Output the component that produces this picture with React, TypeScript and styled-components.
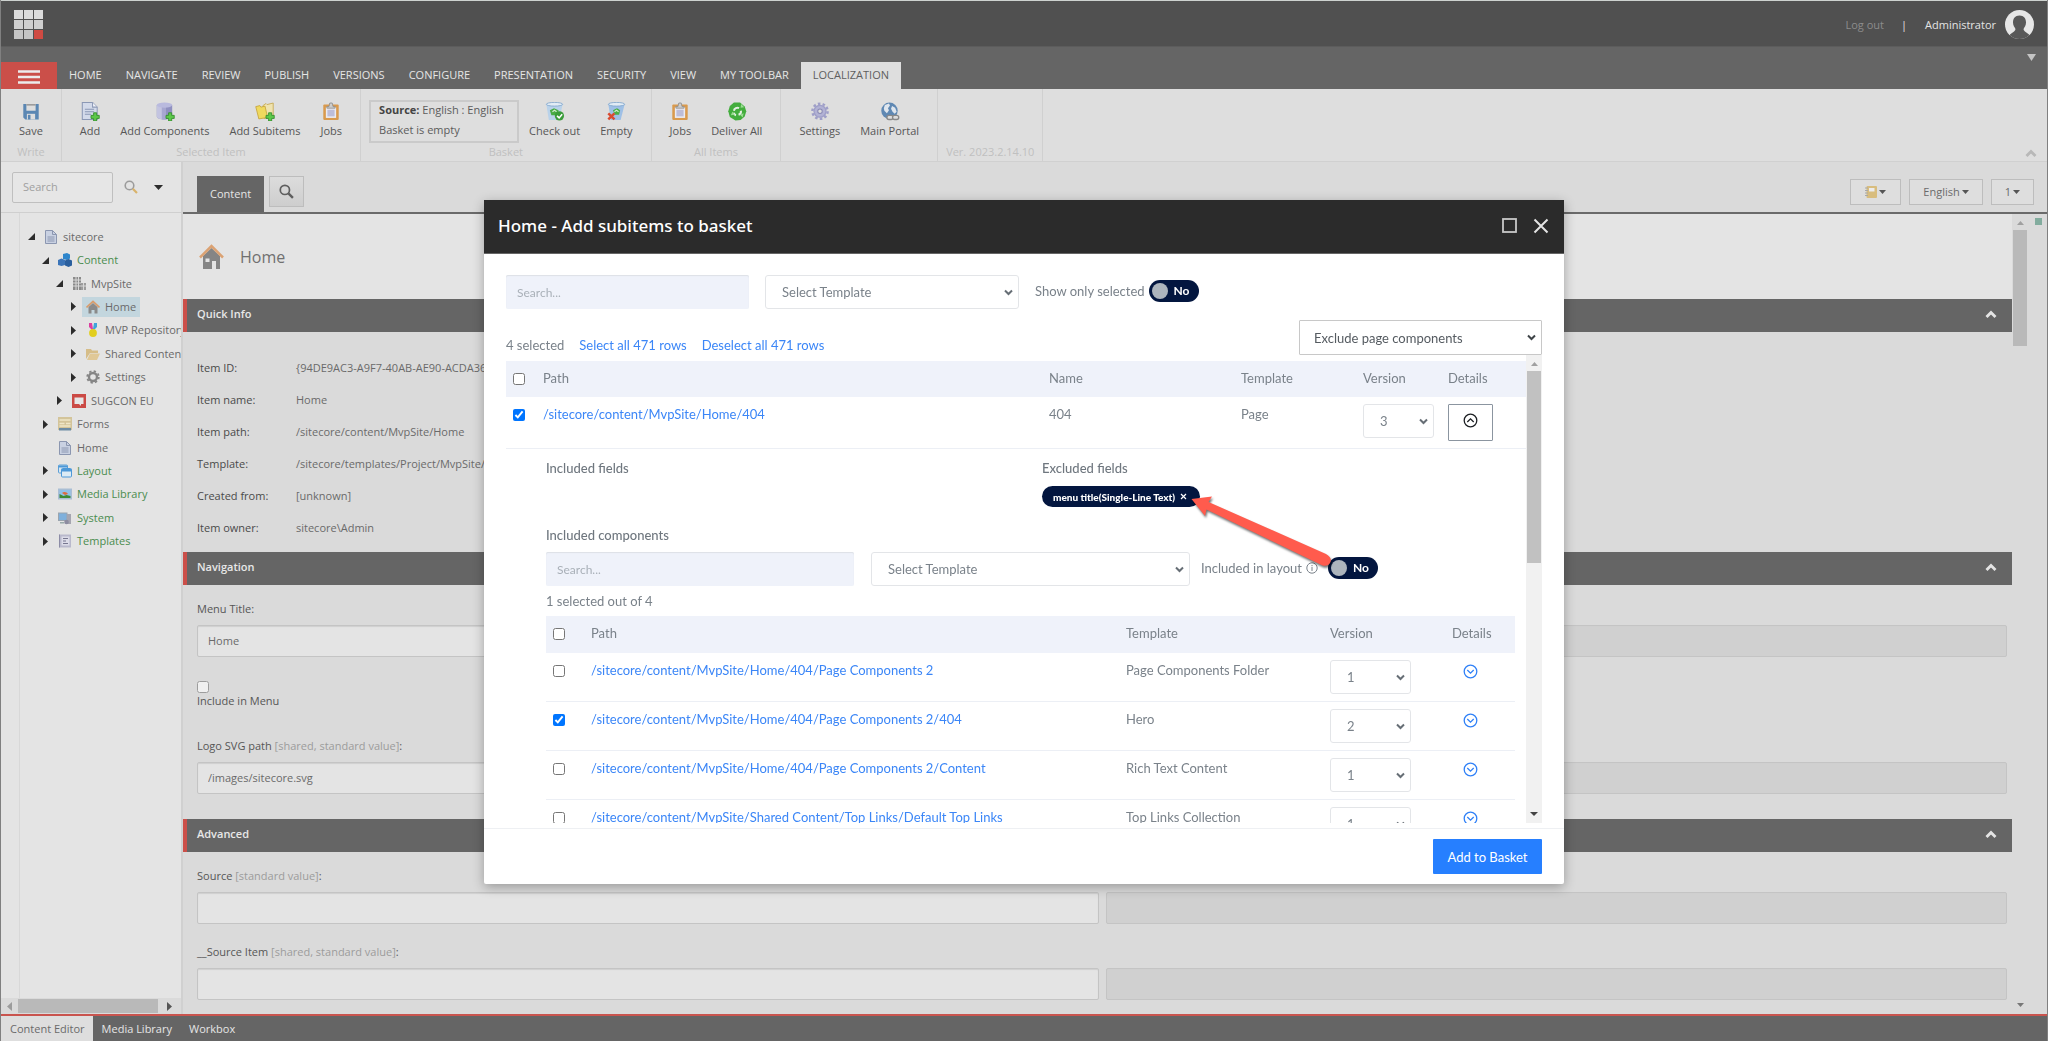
import React from "react";
import styled, { createGlobalStyle, css } from "styled-components";

const ui = `"Open Sans", "Noto Sans", sans-serif`;
const rounded = `Lato, "Open Sans", sans-serif`;

const GlobalStyle = createGlobalStyle`
  * { box-sizing: border-box; }
  body { margin: 0; overflow: hidden; background: #dadada; font-family: ${ui}; font-size: 11px; line-height: 16px; color: #6a6a6a; }
  button, input, select { font: inherit; color: inherit; margin: 0; }
  a { text-decoration: none; color: inherit; }
  ul, dl, dd, h1, h2, h3 { margin: 0; padding: 0; list-style: none; }
  svg { display: block; flex: none; }
`;

/* ---------- page frame ---------- */

const Page = styled.div`
  display: flex;
  flex-direction: column;
  height: 100vh;
  border: solid #808080;
  border-width: 0 1px;
`;

const TopBar = styled.header`
  display: flex;
  align-items: center;
  justify-content: space-between;
  height: 46px;
  flex: none;
  padding: 2px 13px 0 13px;
  border-top: 1px solid #cdd2cf;
  background: #505050;
`;

const Account = styled.div`
  display: flex;
  align-items: center;
  color: #e4e4e4;
`;

const LogOut = styled.a`
  color: #8c8c8c;
`;

const Divider = styled.span`
  padding: 0 18px 0 17px;
`;

const UserName = styled.span`
  margin-right: 9px;
`;

const TabStrip = styled.nav`
  display: flex;
  align-items: flex-end;
  height: 43px;
  flex: none;
  background: #656565;
  border-top: 1px solid #5c5c5c;
`;

const MenuButton = styled.button`
  display: grid;
  place-items: center;
  width: 56px;
  height: 27px;
  padding: 2px 0 0;
  border: 0;
  background: #cb4f49;
`;

const RibbonTab = styled.button<{ $active?: boolean }>`
  height: 27px;
  padding: 0 12px 2px;
  border: 0;
  background: ${(p) => (p.$active ? "#dedede" : "transparent")};
  color: ${(p) => (p.$active ? "#5e5e5e" : "#e6e6e6")};
  text-transform: uppercase;
`;

const StripCaret = styled.div`
  margin-left: auto;
  align-self: flex-start;
  padding: 7px 11px 0 0;
`;

const Ribbon = styled.div`
  display: flex;
  height: 73px;
  flex: none;
  background: #dedede;
  border-bottom: 1px solid #d0d0d0;
`;

const RibbonGroup = styled.section`
  display: flex;
  flex-direction: column;
  justify-content: space-between;
  padding: 11px 8px 2px;
  border-right: 1px solid #d0d0d0;
`;

const RibbonItems = styled.div`
  display: flex;
`;

const RibbonCaption = styled.div`
  text-align: center;
  line-height: 14px;
  color: #c0c0c0;
`;

const RibbonButton = styled.button`
  display: flex;
  flex-direction: column;
  align-items: center;
  gap: 3px;
  padding: 2px 10px 0;
  border: 0;
  background: none;
  line-height: 14px;
  color: #565656;
`;

const BasketInfo = styled.div`
  display: grid;
  align-content: start;
  gap: 4px;
  width: 150px;
  height: 43px;
  padding: 0 8px;
  border: 2px solid #cacaca;
  color: #5c5c5c;

  b { color: #444; }
`;

const RibbonCollapse = styled.div`
  margin-left: auto;
  align-self: flex-end;
  padding: 0 10px 3px 0;
`;

const Body = styled.div`
  display: flex;
  flex: 1;
  min-height: 0;
`;

/* ---------- sidebar ---------- */

const Sidebar = styled.aside`
  display: flex;
  flex-direction: column;
  width: 180px;
  flex: none;
  background: #e4e4e4;
  overflow: hidden;
`;

const SidebarHead = styled.div`
  display: flex;
  align-items: center;
  height: 51px;
  flex: none;
  padding: 0 0 0 11px;
  border-bottom: 1px solid #cfcfcf;
`;

const TreeSearch = styled.input`
  width: 101px;
  height: 31px;
  margin-right: 11px;
  padding: 0 10px 2px;
  border: 1px solid #bfbfbf;
  border-radius: 2px;
  background: #e6e6e6;

  &::placeholder { color: #a0a0a0; }
`;

const SearchCaret = styled.div`
  margin-left: 16px;
`;

const TreePane = styled.div`
  flex: 1;
  min-height: 0;
  margin-left: 18px;
  padding-top: 12px;
  border-left: 1px solid #d8d8d8;
  overflow: hidden;
`;

const Tree = styled.ul`
  display: grid;
  grid-auto-rows: 1fr;
  height: 328px;
`;

const TreeRow = styled.li<{ $level: number }>`
  display: flex;
  align-items: center;
  padding-left: ${(p) => 5 + p.$level * 14}px;
  white-space: nowrap;
`;

const TreeArrow = styled.span`
  display: grid;
  place-items: center;
  width: 12px;
`;

const TreeLink = styled.a<{ $selected?: boolean; $green?: boolean }>`
  display: flex;
  align-items: center;
  gap: 5px;
  height: 20px;
  margin-left: 3px;
  padding: 0 4px 0 4px;
  background: ${(p) => (p.$selected ? "#c3d6de" : "none")};
  color: ${(p) => (p.$green ? "#4a8c4e" : "#6a6a6a")};
`;

const HScroll = styled.div`
  display: grid;
  grid-template-columns: 17px 1fr 23px;
  align-items: center;
  justify-items: center;
  height: 16px;
  background: #dadada;
`;

const HThumb = styled.div`
  width: 100%;
  height: 14px;
  background: #b9b9b9;
`;

const Splitter = styled.div`
  width: 2px;
  flex: none;
  background: #d0d0d0;
`;

/* ---------- editor ---------- */

const Main = styled.main`
  display: flex;
  flex-direction: column;
  flex: 1;
  min-width: 0;
  background: #dadada;
`;

const EditorBar = styled.div`
  display: flex;
  justify-content: space-between;
  align-items: flex-end;
  height: 52px;
  flex: none;
  padding: 0 13px 0 14px;
  border-bottom: 2px solid #6a6a6a;
`;

const EditorTabs = styled.div`
  display: flex;
  align-items: flex-start;
  gap: 5px;
`;

const EditorTab = styled.button`
  height: 36px;
  padding: 0 13px;
  border: 0;
  background: #656565;
  color: #e6e6e6;
`;

const SearchTab = styled.button`
  display: grid;
  place-items: center;
  width: 35px;
  height: 31px;
  padding: 0;
  border: 1px solid #bdbdbd;
  background: linear-gradient(#dcdcdc, #cecece);
`;

const EditorTools = styled.div`
  display: flex;
  gap: 8px;
  padding-bottom: 7px;
`;

const ToolButton = styled.button<{ $width: number }>`
  display: flex;
  align-items: center;
  justify-content: center;
  gap: 2px;
  width: ${(p) => p.$width}px;
  height: 26px;
  padding: 0;
  border: 1px solid #bdbdbd;
  background: #dedede;
`;

const EditorRow = styled.div`
  display: flex;
  flex: 1;
  min-height: 0;
`;

const EditorScroll = styled.div`
  flex: 1;
  min-width: 0;
  overflow: hidden;
`;

const VScroll = styled.div<{ $bg: string }>`
  display: flex;
  flex-direction: column;
  align-items: center;
  width: 16px;
  flex: none;
  padding: 7px 0;
  background: ${(p) => p.$bg};
`;

const VThumb = styled.div<{ $height: number; $bg: string }>`
  width: 14px;
  height: ${(p) => p.$height}px;
  margin: 5px 0 auto;
  background: ${(p) => p.$bg};
`;

const Gutter = styled.div`
  width: 19px;
  flex: none;
  padding: 4px 0 0 7px;
`;

const Validator = styled.div`
  width: 7px;
  height: 7px;
  background: #82ac9e;
`;

const ItemHeader = styled.div`
  display: flex;
  align-items: center;
  gap: 16px;
  height: 85px;
  padding-left: 16px;
  background: #e4e4e4;
`;

const ItemTitle = styled.h1`
  font-size: 16px;
  font-weight: 400;
  line-height: 24px;
  color: #707070;
`;

const SectionHead = styled.h2`
  display: flex;
  align-items: center;
  justify-content: space-between;
  height: 33px;
  padding: 0 15px 3px 10px;
  border-left: 4px solid #cb4f49;
  background: #656565;
  font-size: 11px;
  font-weight: 600;
  color: #e8e8e8;
`;

const InfoList = styled.dl`
  display: grid;
  grid-template-columns: 99px 1fr;
  row-gap: 16px;
  padding: 28px 14px 16px;

  dt { color: #4a4a4a; font-weight: 500; }
`;

const Fields = styled.div`
  padding: 16px 5px 5px 14px;
`;

const Field = styled.div`
  margin-bottom: 20px;
`;

const FieldLabel = styled.label`
  display: block;
  margin-bottom: 8px;
  color: #565656;

  span { color: #9c9c9c; }
`;

const FieldPair = styled.div`
  display: grid;
  grid-template-columns: 1fr 1fr;
  gap: 7px;
`;

const FieldInput = styled.input`
  width: 100%;
  height: 32px;
  padding: 0 10px 2px;
  border: 1px solid #c4c4c4;
  border-radius: 2px;
  background: #e4e4e4;
  box-shadow: inset 0 1px 1px #cfcfcf;

  &:disabled { background: #d0d0d0; }
`;

const CheckField = styled.label`
  display: flex;
  flex-direction: column;
  margin-bottom: 20px;
  padding: 4px 0 9px;
  color: #565656;
`;

const Footer = styled.footer`
  display: flex;
  height: 27px;
  flex: none;
  border-top: 2px solid #c9544e;
  background: #656565;
`;

const FooterTab = styled.button<{ $active?: boolean }>`
  padding: 0 8px 0 9px;
  border: 0;
  background: ${(p) => (p.$active ? "#dedede" : "none")};
  color: ${(p) => (p.$active ? "#6a6a6a" : "#e6e6e6")};
`;

/* ---------- dialog ---------- */

const Overlay = styled.div`
  position: fixed;
  inset: 0;
  display: flex;
  align-items: flex-start;
  justify-content: center;
  padding-top: 200px;
`;

const Dialog = styled.div`
  position: relative;
  width: 1080px;
  border-radius: 2px;
  background: #fff;
  box-shadow: 0 3px 12px rgba(0, 0, 0, 0.3);
  font-family: ${rounded};
  font-size: 13px;
  line-height: 20px;
  color: #7a828a;
`;

const DialogHead = styled.div`
  display: flex;
  align-items: center;
  justify-content: space-between;
  height: 54px;
  padding: 0 15px 2px 14px;
  border-bottom: 1px solid #666;
  background: #2b2b2b;
  color: #fff;
`;

const DialogTitle = styled.h2`
  font-family: "Noto Sans", "Open Sans", sans-serif;
  font-size: 17px;
  font-weight: 500;
  line-height: 24px;
`;

const WindowButtons = styled.div`
  display: flex;
  gap: 16px;
`;

const IconButton = styled.button`
  display: grid;
  place-items: center;
  padding: 0;
  border: 0;
  background: none;
`;

const DialogBody = styled.div`
  padding: 21px 22px 5px;
`;

const Filters = styled.div<{ $columns: string; $gap: number }>`
  display: grid;
  grid-template-columns: ${(p) => p.$columns} 1fr;
  column-gap: ${(p) => p.$gap}px;
`;

const FilterSearch = styled.input<{ $width: number }>`
  width: ${(p) => p.$width}px;
  height: 34px;
  padding: 0 11px;
  border: 0;
  border-radius: 2px;
  background: #eff2fa;
  box-shadow: inset 0 1px 1px #dde0e6;
  font-size: 12px;

  &::placeholder { color: #a9b0b8; opacity: 1; }
`;

const SelectBox = styled.span<{ $strong?: boolean; $width?: number }>`
  display: grid;
  grid-template-columns: 1fr;
  align-items: center;
  width: ${(p) => (p.$width ? p.$width + "px" : "auto")};
  height: ${(p) => (p.$strong ? 35 : 34)}px;
  color: ${(p) => (p.$strong ? "#555b61" : "#7a828a")};

  select {
    grid-area: 1 / 1;
    width: 100%;
    height: 100%;
    padding: 0 24px 0 ${(p) => (p.$strong ? 14 : 16)}px;
    appearance: none;
    border: 1px solid ${(p) => (p.$strong ? "#c8c8c8" : "#e3e5e8")};
    border-radius: ${(p) => (p.$strong ? 1 : 3)}px;
    background: #fff;
  }

  svg {
    grid-area: 1 / 1;
    justify-self: end;
    margin-right: 6px;
    pointer-events: none;
  }
`;

const ToggleLine = styled.div`
  display: flex;
  align-items: center;
  gap: 4px;
  height: 32px;
`;

const InfoMark = styled.svg`
  margin-right: 6px;
`;

const Switch = styled.label`
  display: flex;
  align-items: center;
  gap: 6px;
  width: 50px;
  height: 22px;
  padding: 0 3px;
  border-radius: 11px;
  background: #03163f;
  color: #fff;
  font-size: 12px;
  font-weight: 700;

  input {
    width: 16px;
    height: 16px;
    appearance: none;
    border-radius: 50%;
    background: #adb5bd;
  }
`;

const SelectionBar = styled.div`
  display: flex;
  justify-content: space-between;
  margin-top: 11px;
`;

const SelectionInfo = styled.div`
  display: flex;
  gap: 15px;
  padding-top: 15px;
`;

const Link = styled.a`
  color: #3b86f7;
`;

const ScrollArea = styled.div`
  display: flex;
  height: 468px;
  overflow: hidden;
`;

const ScrollContent = styled.div`
  flex: 1;
  min-width: 0;
  padding-top: 6px;
`;

const Table = styled.table`
  width: 100%;
  table-layout: fixed;
  border-collapse: separate;
  border-spacing: 0;
`;

const Col = styled.col<{ $width?: number }>`
  width: ${(p) => (p.$width ? p.$width + "px" : "auto")};
`;

const checkCell = css`
  &:first-child { padding: 12px 0 0 7px; }
`;

const Th = styled.th<{ $tall?: boolean }>`
  height: ${(p) => (p.$tall ? 37 : 36)}px;
  padding: 7px 0 0;
  background: #eff2fa;
  text-align: left;
  vertical-align: top;
  font-weight: 400;
  ${checkCell}
`;

const Td = styled.td`
  padding: 7px 0 0;
  border-bottom: 1px solid #eceff5;
  vertical-align: top;
  ${checkCell}
`;

const ControlTd = styled(Td)`
  padding: 7px 0;
`;

const DetailsTd = styled.td`
  padding: 9px 11px 0 40px;
`;

const Check = styled.input.attrs({ type: "checkbox" })`
  display: block;
  width: 12px;
  height: 12px;
  accent-color: #0075ff;
`;

const DimCheck = styled(Check)`
  opacity: 0.6;
`;

const DetailsToggle = styled.button<{ $open?: boolean }>`
  display: flex;
  justify-content: center;
  width: ${(p) => (p.$open ? 45 : 36)}px;
  height: ${(p) => (p.$open ? 37 : 28)}px;
  padding: ${(p) => (p.$open ? 8 : 4)}px 0 0;
  border: ${(p) => (p.$open ? "1px solid #8b95a0" : "0")};
  border-radius: 1px;
  background: none;
  color: ${(p) => (p.$open ? "#1c1f23" : "#2f80f7")};
`;

const FieldColumns = styled.div`
  display: grid;
  grid-template-columns: 1fr 1fr;
  gap: 23px;
  margin-bottom: 18px;
`;

const Heading = styled.h3`
  font-size: 13px;
  font-weight: 500;
  line-height: 20px;
  color: #6f777f;
`;

const Pill = styled.button`
  display: inline-flex;
  align-items: center;
  gap: 5px;
  height: 21px;
  margin-top: 8px;
  padding: 0 13px 0 11px;
  border: 0;
  border-radius: 11px;
  background: #03163f;
  color: #fff;
  font-size: 10px;
  font-weight: 900;
`;

const NestedFilters = styled(Filters)`
  margin: 7px 0 5px;
`;

const NestedTable = styled(Table)`
  margin-top: 5px;
`;

const DialogFoot = styled.div`
  display: flex;
  justify-content: flex-end;
  padding: 10px 22px;
  border-top: 1px solid #eef0f3;
`;

const Primary = styled.button`
  height: 35px;
  min-width: 109px;
  padding: 0 13px;
  border: 0;
  border-radius: 1px;
  background: #267fff;
  color: #fff;
`;

const Pointer = styled.svg`
  position: absolute;
  left: 700px;
  top: 288px;
  pointer-events: none;
  filter: drop-shadow(1px 2px 1px rgba(0, 0, 0, 0.55));
`;

/* ---------- icons ---------- */

const Logo = () => (
  <svg width="30" height="30" viewBox="0 0 30 30">
    {[0, 1, 2].map((r) =>
      [0, 1, 2].map((c) => (
        <rect key={`${r}${c}`} x={c * 10} y={r * 10} width="9" height="9" fill={r === 2 && c === 2 ? "#cf4a42" : ["#dcdcdc", "#cfcfcf", "#c4c4c4"][r]} />
      ))
    )}
  </svg>
);

const Avatar = () => (
  <svg width="29" height="29" viewBox="0 0 29 29">
    <defs><clipPath id="face"><circle cx="14.500" cy="14.500" r="14.500" /></clipPath></defs>
    <g clipPath="url(#face)">
      <rect width="29" height="29" fill="#e6e6e6" />
      <path d="M14.500 5.500c4.500 0 6.500 3 6.500 7 0 3-1.500 4.500-2.500 6.500 0 2 2 3 5.500 5.500l1 6H4l1-6c3.500-2.500 5.500-3.500 5.500-5.500-1-2-2.500-3.500-2.500-6.500 0-4 2-7 6.500-7z" fill="#585858" />
    </g>
  </svg>
);

const Caret = ({ w = 8, h = 5, color = "#555" }) => (
  <svg width={w} height={h} viewBox="0 0 8 5" preserveAspectRatio="none"><path d="M0 0h8L4 5z" fill={color} /></svg>
);
const CaretUp = ({ color = "#a0a0a0" }) => (
  <svg width="7" height="4" viewBox="0 0 8 5" preserveAspectRatio="none"><path d="M0 5h8L4 0z" fill={color} /></svg>
);
const SideArrow = ({ left = false, color = "#2c2c2c" }) => (
  <svg width="5" height="9" viewBox="0 0 5 9"><path d={left ? "M5 0v9L0 4.500z" : "M0 0v9l5-4.500z"} fill={color} /></svg>
);
const OpenArrow = () => (
  <svg width="7" height="7" viewBox="0 0 7 7"><path d="M7 0v7H0z" fill="#2c2c2c" /></svg>
);
const Chevron = ({ up = false, color = "#666e75", size = 9, stroke = 2 }) => (
  <svg width={size} height={size === 9 ? 7 : 9} viewBox="0 0 9 7" fill="none" stroke={color} strokeWidth={stroke}>
    <path d={up ? "M1 5.500L4.500 2 8 5.500" : "M1 1.500L4.500 5 8 1.500"} />
  </svg>
);
const Magnifier = ({ size = 14, color = "#9c9c9c", handle = "#d9b36c" }) => (
  <svg width={size} height={size} viewBox="0 0 14 14" fill="none">
    <circle cx="5.500" cy="5.500" r="4.300" stroke={color} strokeWidth="1.600" />
    <path d="M8.800 8.800L13 13" stroke={handle} strokeWidth="2.200" />
  </svg>
);
const Plus = () => (
  <path d="M12.500 10.500h3v2.500H18v3h-2.500v2.500h-3V16H10v-3h2.500z" fill="#5cc84a" stroke="#2f8a2a" strokeWidth=".8" />
);

const icons: Record<string, React.ReactNode> = {
  save: (<><path d="M1.500 2h15v15H3.500l-2-2z" fill="#5b87b3" /><rect x="4.500" y="2" width="9" height="6.500" fill="#dedede" /><rect x="4.500" y="2" width="9" height="1.500" fill="#999" /><rect x="5" y="11.500" width="8" height="5.500" fill="#dedede" /><rect x="6" y="12.500" width="2.500" height="4.500" fill="#5b87b3" /></>),
  add: (<><path d="M1.500.5h10L16 5v12H1.500z" fill="#d3daea" stroke="#8b98b5" /><path d="M11.500.5V5H16" fill="#f2f4fa" stroke="#8b98b5" /><path d="M4 7h9M4 9.500h9M4 12h6" stroke="#8b98b5" /><Plus /></>),
  database: (<><path d="M1 3v11c0 1.600 3.500 3 7.500 3s7.500-1.400 7.500-3V3z" fill="#8f90c0" /><path d="M1 3v11c0 1.400 2 2.400 5 2.800V3z" fill="#c3c4e0" /><path d="M6 4h4v13H6z" fill="#a6a7d0" /><ellipse cx="8.500" cy="3" rx="7.500" ry="2.500" fill="#b9bade" /><Plus /></>),
  subitems: (<><path d="M7 3.500l3-2 1 1L17 1v13l-9 2z" fill="#efe3b0" stroke="#c5a64a" strokeWidth=".8" /><path d="M0 4.500l4-1 1 1.500 4-1 2.500 11L3 16.500z" fill="#efd95e" stroke="#c5a23a" strokeWidth=".8" /><Plus /></>),
  jobs: (<><rect x="1.500" y="2.500" width="15" height="15" rx="1" fill="#d99a4e" /><rect x="4" y="5" width="10" height="10.500" fill="#ececf2" /><rect x="5.500" y="7.500" width="7" height="6.500" fill="#bdbdd8" /><path d="M5 6V4.500h2l.8-3.500h2.400l.8 3.500h2V6z" fill="#cdcdcd" stroke="#8c8c8c" strokeWidth=".8" /></>),
  checkout: (<><path d="M.5 2l2.500 15.500h10L16.500 2z" fill="#b9d2ea" /><ellipse cx="8.500" cy="2.200" rx="8" ry="1.800" fill="#e2ecf5" stroke="#7fa5cc" strokeWidth=".8" /><path d="M4 8l4-2 4.500 2-1 5H5.500z" fill="#48ab44" /><path d="M6.500 9.500l2-1.500 2 1.500" fill="none" stroke="#d5ecd2" /><circle cx="13.300" cy="13.500" r="4.500" fill="#3a9c3a" /><path d="M11 13.500l2 2 3-3.500" stroke="#fff" strokeWidth="1.500" fill="none" /></>),
  empty: (<><path d="M1.500 2L4 17.500h9.500L17.500 2z" fill="#9fc0e6" /><ellipse cx="9.500" cy="2.200" rx="8" ry="1.800" fill="#e2ecf5" stroke="#7fa5cc" strokeWidth=".8" /><path d="M6 8l4-2 3 2-1 4.500H8z" fill="#4aae46" /><path d="M7.500 9.500l2-1.500 2 1.500" fill="none" stroke="#d5ecd2" /><path d="M1.500 11l6 6M7.500 11l-6 6" stroke="#d94a30" strokeWidth="2.400" /></>),
  deliver: (<><path d="M6 .5h6l4.500 4L18 9l-1.500 5-4 3.500-5 .5L2 14.500.5 9 2 4z" fill="#43ad3d" /><path d="M6 8.500a3.500 3.500 0 0 1 5-2.500M12.800 8.500a3.500 3.500 0 0 1-2.300 4M8 12.800A3.500 3.500 0 0 1 5.600 10.500" fill="none" stroke="#e4efe2" strokeWidth="2" /><path d="M13 2l3 3-3.500.5zM15.500 11l-1 4-2.500-2.500zM3 13l1.500-3.500L7 12.500z" fill="#9bdc94" /></>),
  gear: (<><circle cx="9" cy="9" r="6" fill="#b2b2d4" /><circle cx="9" cy="9" r="7.400" fill="none" stroke="#9f9fc8" strokeWidth="2.400" strokeDasharray="2.500 2.150" /><circle cx="9" cy="9" r="5.800" fill="none" stroke="#9f9fc8" strokeWidth="1.200" /><circle cx="9" cy="9" r="2.200" fill="#dedede" stroke="#8a8ab5" /></>),
  portal: (<><circle cx="8.500" cy="8.500" r="8" fill="#5f88b3" /><path d="M4 3l4-1.500 1 2-2 2.500 1 2-2 3-2.500-2.500L3 6zM11 4l3 1.500 1.500 4-2 2-2-2-1.500-3z" fill="#dfe6ee" /><rect x="6" y="13" width="6" height="4" rx="2" fill="#ddd" stroke="#888" strokeWidth="1.300" /><rect x="11.500" y="13" width="6" height="4" rx="2" fill="#ddd" stroke="#888" strokeWidth="1.300" /></>),
};

const RIcon = ({ name }: { name: string }) => <svg width="20" height="19" viewBox="-0.500 0 19 18.500">{icons[name]}</svg>;

const treeIcons: Record<string, React.ReactNode> = {
  doc: (<><path d="M1.500.5h7l4 4v9h-11z" fill="#c9d1e2" stroke="#8b96b0" /><path d="M8.500.5v4h4M3.500 7h7M3.500 9h7M3.500 11h7" fill="none" stroke="#8b96b0" /></>),
  cubes: (<><path d="M5 1l4-1 3 1.500v4L9 7 5 6z" fill="#2e86cc" /><path d="M0 7l3.500-1.500L7 7v5l-3.500 1L0 12z" fill="#3b74b8" /><path d="M7 7.500L10.500 6 14 7.500v5L10.500 14 7 12.500z" fill="#2a5f9e" /></>),
  site: (<><path d="M1 0h8v13H1z" fill="#8a8a8a" /><path d="M9 6h5v7H9z" fill="#9c9c9c" /><path d="M1 3h8M1 6h8M1 9h13M4 0v13M6.500 0v13M11.500 6v7" stroke="#d8d8d8" /></>),
  home: (<><path d="M2.500 7L7 3l4.500 4v6.500H8.500V10H5.500v3.500h-3z" fill="#8a8a8a" /><path d="M.5 7.500L7 1.500l6.500 6" fill="none" stroke="#d79b6b" strokeWidth="1.700" /></>),
  medal: (<><path d="M3 0h3l1 6-1 1-3-3z" fill="#dc3fa0" /><path d="M11 0H8L7 6l1 1 3-3z" fill="#3fa3dc" /><circle cx="7" cy="10" r="3.900" fill="#e2ce1e" /></>),
  folder: (<><path d="M0 2h5l1 1.500h6V6H4L0 12z" fill="#d6bd88" /><path d="M4 6.500h10L11 13H1z" fill="#e0c896" /></>),
  cog: (<><circle cx="7" cy="7" r="4" fill="none" stroke="#858585" strokeWidth="2.400" /><circle cx="7" cy="7" r="5.800" fill="none" stroke="#858585" strokeWidth="1.800" strokeDasharray="2.300 2.255" /></>),
  sug: (<><rect width="14" height="14" fill="#cb4a45" /><path d="M2.500 3.500h9v6.500H9v2L7 10H2.500z" fill="#e6e6e6" /></>),
  forms: (<><path d="M0 0h14v13H0z" fill="#d3c49a" /><path d="M1.500 3h11M1.500 6.500h5M8 6.500h4.500M1.500 9h11" stroke="#efe6c8" strokeWidth="1.500" /><path d="M1 11h12v2.500H1z" fill="#6d8ca5" /></>),
  layout: (<><rect x=".5" y="1" width="9" height="8" rx="1" fill="#d9e6f0" stroke="#5da0d6" /><rect x="3.500" y="4.500" width="10" height="8.500" rx="1" fill="#dcebf5" stroke="#4c98d8" /><path d="M.5 1.500h9v2h-9zM3.500 5h10v2.500h-10z" fill="#4c98d8" /></>),
  media: (<><rect y="1.500" width="14" height="11" fill="#a9bed4" /><rect x="1.500" y="3" width="11" height="8" fill="#8fc0ea" /><path d="M1.500 7l4 2 3-1 4 1v2h-11z" fill="#3c8a35" /><path d="M4 6c2-2 5-1 6 1l-3 1z" fill="#dc6b3c" /></>),
  system: (<><rect x=".5" y="2" width="8.500" height="7.500" fill="#7fb0dc" stroke="#9aa4ae" /><rect x="9" y="3" width="4" height="10" fill="#a5a5b0" /><circle cx="8.500" cy="11" r="2.300" fill="#8c8ca0" /><path d="M2 11h4v1.500H2z" fill="#9aa" /></>),
  templates: (<><rect x="1" y=".5" width="12" height="13" fill="#b9b9cc" /><rect x="3.500" y="2.500" width="8" height="9" fill="#dcdce8" /><path d="M5 4.500h5M5 7h3M5 9.500h5" stroke="#77778f" /><path d="M1.500.5v13" stroke="#8c8ca6" /></>),
};

const HouseIcon = () => (
  <svg width="25" height="25" viewBox="0 0 25 25">
    <path d="M4 12l8.500-8 8.500 8v13h-4v-8h-4v8H4z" fill="#858585" />
    <path d="M6.500 14.500h4v3.500h-4z" fill="#e4e4e4" />
    <path d="M1 13.500L12.500 2 24 13.500" fill="none" stroke="#dba273" strokeWidth="2.500" />
  </svg>
);

const CircleChevron = ({ up = false }) => (
  <svg width="15" height="15" viewBox="0 0 15 15" fill="none" stroke="currentColor" strokeWidth="1.300">
    <circle cx="7.500" cy="7.500" r="6.300" />
    <path d={up ? "M4.300 9l3.200-3.200L10.700 9" : "M4.300 6l3.200 3.200L10.700 6"} />
  </svg>
);

/* ---------- data ---------- */

const ribbonTabs = ["Home", "Navigate", "Review", "Publish", "Versions", "Configure", "Presentation", "Security", "View", "My Toolbar", "Localization"];

type Node = { label: string; icon: string; level: number; state?: "open" | "closed"; green?: boolean; selected?: boolean };
const tree: Node[] = [
  { label: "sitecore", icon: "doc", level: 0, state: "open" },
  { label: "Content", icon: "cubes", level: 1, state: "open", green: true },
  { label: "MvpSite", icon: "site", level: 2, state: "open" },
  { label: "Home", icon: "home", level: 3, state: "closed", selected: true },
  { label: "MVP Repository", icon: "medal", level: 3, state: "closed" },
  { label: "Shared Content", icon: "folder", level: 3, state: "closed" },
  { label: "Settings", icon: "cog", level: 3, state: "closed" },
  { label: "SUGCON EU", icon: "sug", level: 2, state: "closed" },
  { label: "Forms", icon: "forms", level: 1, state: "closed" },
  { label: "Home", icon: "doc", level: 1 },
  { label: "Layout", icon: "layout", level: 1, state: "closed", green: true },
  { label: "Media Library", icon: "media", level: 1, state: "closed", green: true },
  { label: "System", icon: "system", level: 1, state: "closed", green: true },
  { label: "Templates", icon: "templates", level: 1, state: "closed", green: true },
];

const info = [
  ["Item ID:", "{94DE9AC3-A9F7-40AB-AE90-ACDA364B17C5}"],
  ["Item name:", "Home"],
  ["Item path:", "/sitecore/content/MvpSite/Home"],
  ["Template:", "/sitecore/templates/Project/MvpSite/Home"],
  ["Created from:", "[unknown]"],
  ["Item owner:", "sitecore\\Admin"],
];

const components = [
  { path: "/sitecore/content/MvpSite/Home/404/Page Components 2", template: "Page Components Folder", version: "1" },
  { path: "/sitecore/content/MvpSite/Home/404/Page Components 2/404", template: "Hero", version: "2", checked: true },
  { path: "/sitecore/content/MvpSite/Home/404/Page Components 2/Content", template: "Rich Text Content", version: "1" },
  { path: "/sitecore/content/MvpSite/Shared Content/Top Links/Default Top Links", template: "Top Links Collection", version: "1" },
];

/* ---------- pieces ---------- */

const Tool = ({ icon, children }: { icon: string; children: React.ReactNode }) => (
  <RibbonButton type="button"><RIcon name={icon} />{children}</RibbonButton>
);

const Group = ({ caption, children }: { caption?: string; children?: React.ReactNode }) => (
  <RibbonGroup>
    <RibbonItems>{children}</RibbonItems>
    <RibbonCaption>{caption}</RibbonCaption>
  </RibbonGroup>
);

const Section = ({ title, children }: { title: string; children: React.ReactNode }) => (
  <section>
    <SectionHead>{title}<Chevron up color="#e4e4e4" size={12} stroke={2.2} /></SectionHead>
    {children}
  </section>
);

const TextField = ({ id, label, note, value = "" }: { id: string; label: string; note?: string; value?: string }) => (
  <Field>
    <FieldLabel htmlFor={id}>{label}{note && <span> [{note}]</span>}:</FieldLabel>
    <FieldPair>
      <FieldInput id={id} defaultValue={value} />
      <FieldInput disabled aria-label={`${label} translation`} />
    </FieldPair>
  </Field>
);

const Select = ({ label, value, strong, width }: { label: string; value: string; strong?: boolean; width?: number }) => (
  <SelectBox $strong={strong} $width={width}>
    <select aria-label={label} defaultValue={value}><option>{value}</option></select>
    <Chevron color={strong ? "#3f4448" : "#666e75"} />
  </SelectBox>
);

const Toggle = ({ label }: { label: string }) => (
  <Switch><input type="checkbox" aria-label={label} />No</Switch>
);

export default function App() {
  return (
    <>
      <GlobalStyle />
      <Page>
        <TopBar>
          <Logo />
          <Account>
            <LogOut href="#">Log out</LogOut>
            <Divider>|</Divider>
            <UserName>Administrator</UserName>
            <Avatar />
          </Account>
        </TopBar>
        <TabStrip>
          <MenuButton type="button" aria-label="Menu">
            <svg width="22" height="14" viewBox="0 0 22 14"><path d="M0 1.500h22M0 7h22M0 12.500h22" stroke="#ececec" strokeWidth="2.500" /></svg>
          </MenuButton>
          {ribbonTabs.map((t) => <RibbonTab key={t} type="button" $active={t === "Localization"}>{t}</RibbonTab>)}
          <StripCaret><Caret w={9} h={7} color="#c4c4c4" /></StripCaret>
        </TabStrip>
        <Ribbon>
          <Group caption="Write"><Tool icon="save">Save</Tool></Group>
          <Group caption="Selected Item">
            <Tool icon="add">Add</Tool>
            <Tool icon="database">Add Components</Tool>
            <Tool icon="subitems">Add Subitems</Tool>
            <Tool icon="jobs">Jobs</Tool>
          </Group>
          <Group caption="Basket">
            <BasketInfo><span><b>Source:</b> English : English</span><span>Basket is empty</span></BasketInfo>
            <Tool icon="checkout">Check out</Tool>
            <Tool icon="empty">Empty</Tool>
          </Group>
          <Group caption="All Items">
            <Tool icon="jobs">Jobs</Tool>
            <Tool icon="deliver">Deliver All</Tool>
          </Group>
          <Group>
            <Tool icon="gear">Settings</Tool>
            <Tool icon="portal">Main Portal</Tool>
          </Group>
          <Group caption="Ver. 2023.2.14.10" />
          <RibbonCollapse><Chevron up color="#b8b8b8" size={12} stroke={2.2} /></RibbonCollapse>
        </Ribbon>
        <Body>
          <Sidebar>
            <SidebarHead>
              <TreeSearch placeholder="Search" aria-label="Search tree" />
              <Magnifier />
              <SearchCaret><Caret w={9} h={5} color="#2c2c2c" /></SearchCaret>
            </SidebarHead>
            <TreePane>
              <Tree>
                {tree.map((n, i) => (
                  <TreeRow key={i} $level={n.level}>
                    <TreeArrow>{n.state === "open" ? <OpenArrow /> : n.state === "closed" ? <SideArrow /> : null}</TreeArrow>
                    <TreeLink href="#" $green={n.green} $selected={n.selected}>
                      <svg width="14" height="14" viewBox="0 0 14 14">{treeIcons[n.icon]}</svg>
                      {n.label}
                    </TreeLink>
                  </TreeRow>
                ))}
              </Tree>
            </TreePane>
            <HScroll><SideArrow left color="#9c9c9c" /><HThumb /><SideArrow color="#555" /></HScroll>
          </Sidebar>
          <Splitter />
          <Main>
            <EditorBar>
              <EditorTabs>
                <EditorTab type="button">Content</EditorTab>
                <SearchTab type="button" aria-label="Search"><Magnifier size={15} color="#5e5e5e" handle="#5e5e5e" /></SearchTab>
              </EditorTabs>
              <EditorTools>
                <ToolButton type="button" $width={51} aria-label="Notebook">
                  <svg width="12" height="12" viewBox="0 0 12 12"><rect x="1.500" width="10.500" height="12" rx="1" fill="#d8bd7e" /><rect x="4" y="2" width="5.500" height="3.500" fill="#ececec" /><path d="M0 2h3M0 4.500h3M0 7h3M0 9.500h3" stroke="#a8a8a8" /></svg>
                  <Caret w={7} h={4} />
                </ToolButton>
                <ToolButton type="button" $width={74}>English<Caret w={7} h={4} /></ToolButton>
                <ToolButton type="button" $width={43}>1<Caret w={7} h={4} /></ToolButton>
              </EditorTools>
            </EditorBar>
            <EditorRow>
              <EditorScroll>
                <ItemHeader><HouseIcon /><ItemTitle>Home</ItemTitle></ItemHeader>
                <Section title="Quick Info">
                  <InfoList>
                    {info.map(([k, v]) => <React.Fragment key={k}><dt>{k}</dt><dd>{v}</dd></React.Fragment>)}
                  </InfoList>
                </Section>
                <Section title="Navigation">
                  <Fields>
                    <TextField id="menu-title" label="Menu Title" value="Home" />
                    <CheckField><DimCheck />Include in Menu</CheckField>
                    <TextField id="logo" label="Logo SVG path" note="shared, standard value" value="/images/sitecore.svg" />
                  </Fields>
                </Section>
                <Section title="Advanced">
                  <Fields>
                    <TextField id="source" label="Source" note="standard value" />
                    <TextField id="source-item" label="__Source Item" note="shared, standard value" />
                  </Fields>
                </Section>
              </EditorScroll>
              <VScroll $bg="#dadada"><CaretUp /><VThumb $height={116} $bg="#b9b9b9" /><Caret w={7} h={4} color="#777" /></VScroll>
              <Gutter><Validator /></Gutter>
            </EditorRow>
          </Main>
        </Body>
        <Footer>
          <FooterTab type="button" $active>Content Editor</FooterTab>
          <FooterTab type="button">Media Library</FooterTab>
          <FooterTab type="button">Workbox</FooterTab>
        </Footer>
      </Page>

      <Overlay>
        <Dialog role="dialog" aria-label="Home - Add subitems to basket">
          <DialogHead>
            <DialogTitle>Home - Add subitems to basket</DialogTitle>
            <WindowButtons>
              <IconButton type="button" aria-label="Maximize">
                <svg width="15" height="15" viewBox="0 0 15 15"><rect x="1" y="1" width="13" height="13" fill="none" stroke="#c8c8c8" strokeWidth="1.800" /></svg>
              </IconButton>
              <IconButton type="button" aria-label="Close">
                <svg width="16" height="16" viewBox="0 0 16 16"><path d="M1.500 1.500l13 13M14.500 1.500l-13 13" stroke="#e4e4e4" strokeWidth="2" /></svg>
              </IconButton>
            </WindowButtons>
          </DialogHead>
          <DialogBody>
            <Filters $columns="243px 254px" $gap={16}>
              <FilterSearch $width={243} placeholder="Search..." aria-label="Search" />
              <Select label="Template" value="Select Template" />
              <ToggleLine>Show only selected<Toggle label="Show only selected" /></ToggleLine>
            </Filters>
            <SelectionBar>
              <SelectionInfo>
                <span>4 selected</span>
                <Link href="#">Select all 471 rows</Link>
                <Link href="#">Deselect all 471 rows</Link>
              </SelectionInfo>
              <Select label="Page components" value="Exclude page components" strong width={243} />
            </SelectionBar>
            <ScrollArea>
              <ScrollContent>
                <Table>
                  <colgroup><Col $width={37} /><Col /><Col $width={192} /><Col $width={122} /><Col $width={85} /><Col $width={78} /></colgroup>
                  <thead>
                    <tr><Th><Check aria-label="Select all" /></Th><Th>Path</Th><Th>Name</Th><Th>Template</Th><Th>Version</Th><Th>Details</Th></tr>
                  </thead>
                  <tbody>
                    <tr>
                      <Td><Check defaultChecked aria-label="Select 404" /></Td>
                      <Td><Link href="#">/sitecore/content/MvpSite/Home/404</Link></Td>
                      <Td>404</Td>
                      <Td>Page</Td>
                      <ControlTd><Select label="Version" value="3" width={71} /></ControlTd>
                      <ControlTd><DetailsToggle type="button" $open aria-label="Hide details"><CircleChevron up /></DetailsToggle></ControlTd>
                    </tr>
                    <tr>
                      <DetailsTd colSpan={6}>
                        <FieldColumns>
                          <Heading>Included fields</Heading>
                          <div>
                            <Heading>Excluded fields</Heading>
                            <Pill type="button">menu title(Single-Line Text)
                              <svg width="7" height="7" viewBox="0 0 7 7"><path d="M1 1l5 5M6 1L1 6" stroke="#fff" strokeWidth="1.200" /></svg>
                            </Pill>
                          </div>
                        </FieldColumns>
                        <Heading>Included components</Heading>
                        <NestedFilters $columns="314px 319px" $gap={11}>
                          <FilterSearch $width={308} placeholder="Search..." aria-label="Search components" />
                          <Select label="Component template" value="Select Template" />
                          <ToggleLine>Included in layout
                            <InfoMark width="12" height="12" viewBox="0 0 12 12" fill="none" stroke="#7a828a"><circle cx="6" cy="6" r="5.200" /><path d="M6 5v4M6 3v1.200" /></InfoMark>
                            <Toggle label="Included in layout" />
                          </ToggleLine>
                        </NestedFilters>
                        <div>1 selected out of 4</div>
                        <NestedTable>
                          <colgroup><Col $width={45} /><Col /><Col $width={204} /><Col $width={122} /><Col $width={63} /></colgroup>
                          <thead>
                            <tr><Th $tall><Check aria-label="Select all components" /></Th><Th $tall>Path</Th><Th $tall>Template</Th><Th $tall>Version</Th><Th $tall>Details</Th></tr>
                          </thead>
                          <tbody>
                            {components.map((c) => (
                              <tr key={c.path}>
                                <Td><Check defaultChecked={c.checked} aria-label={c.path} /></Td>
                                <Td><Link href="#">{c.path}</Link></Td>
                                <Td>{c.template}</Td>
                                <ControlTd><Select label="Version" value={c.version} width={81} /></ControlTd>
                                <ControlTd><DetailsToggle type="button" aria-label="Show details"><CircleChevron /></DetailsToggle></ControlTd>
                              </tr>
                            ))}
                          </tbody>
                        </NestedTable>
                      </DetailsTd>
                    </tr>
                  </tbody>
                </Table>
              </ScrollContent>
              <VScroll $bg="#f1f1f1"><CaretUp /><VThumb $height={192} $bg="#c1c1c1" /><Caret w={8} h={4} color="#444" /></VScroll>
            </ScrollArea>
          </DialogBody>
          <DialogFoot><Primary type="button">Add to Basket</Primary></DialogFoot>
          <Pointer width="150" height="82" viewBox="0 0 150 82">
            <path d="M7.500 11L28 8.500l-3.500 5.500L142 66c4 2.500 5.500 5 4.500 8s-4 4.500-8 3.500L22.500 21.500 21 28z" fill="#ff5b4d" />
          </Pointer>
        </Dialog>
      </Overlay>
    </>
  );
}
